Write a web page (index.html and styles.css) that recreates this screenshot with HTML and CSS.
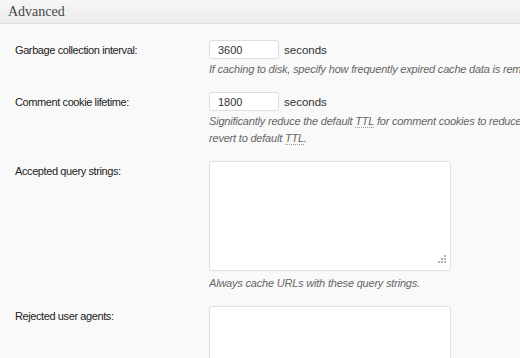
FILE: index.html
```html
<!DOCTYPE html>
<html>
<head>
    <title>Advanced</title>
    <meta charset="UTF-8">
    <link rel="stylesheet" href="styles.css">
</head>
<body>
    <h3 class="titulo">Advanced</h3>
    <div class="tabla">
        <div class="fila">
            <label class="etiqueta">Garbage collection interval:</label>
            <div class="campo">
                <div class="linea"><input type="text" class="corto" value="3600"> seconds</div>
                <p class="descripcion">If caching to disk, specify how frequently expired cache data is removed. For busy sites, a lower value is best.</p>
            </div>
        </div>
        <div class="fila">
            <label class="etiqueta">Comment cookie lifetime:</label>
            <div class="campo">
                <div class="linea"><input type="text" class="corto" value="1800"> seconds</div>
                <p class="descripcion">Significantly reduce the default <acronym title="Time to Live">TTL</acronym> for comment cookies to reduce the number of pages not cached, or leave to<br>revert to default <acronym title="Time to Live">TTL</acronym>.</p>
            </div>
        </div>
        <div class="fila">
            <label class="etiqueta">Accepted query strings:</label>
            <div class="campo">
                <div class="caja">
                    <textarea class="area"></textarea>
                    <svg class="agarre" width="10" height="10" viewBox="0 0 10 10">
                        <rect x="7" y="0" width="2" height="2" fill="#b4b4b4"/>
                        <rect x="4" y="3" width="2" height="2" fill="#b4b4b4"/>
                        <rect x="7" y="3" width="2" height="2" fill="#b4b4b4"/>
                        <rect x="1" y="6" width="2" height="2" fill="#b4b4b4"/>
                        <rect x="4" y="6" width="2" height="2" fill="#b4b4b4"/>
                        <rect x="7" y="6" width="2" height="2" fill="#b4b4b4"/>
                    </svg>
                </div>
                <p class="descripcion bajo">Always cache URLs with these query strings.</p>
            </div>
        </div>
        <div class="fila">
            <label class="etiqueta">Rejected user agents:</label>
            <div class="campo">
                <div class="caja">
                    <textarea class="area"></textarea>
                </div>
                <p class="descripcion bajo">Never send cache pages for these user agents.</p>
            </div>
        </div>
    </div>
</body>
</html>
```

FILE: styles.css
```css
body {
    font-family: "Liberation Sans", Arial, sans-serif;
    font-size: 11px;
    color: #333;
    background-color: #f9f9f9;
    margin: 0;
    padding: 0;
    overflow: hidden;
}

.titulo {
    font-family: "Liberation Serif", Georgia, serif;
    font-weight: normal;
    font-size: 14px;
    color: #464646;
    margin: 0;
    height: 23px;
    line-height: 23px;
    padding: 0 8px;
    background: linear-gradient(#f6f6f6, #ececec);
    border-bottom: 1px solid #dfdfdf;
}

.tabla {
    padding: 9px 0 0 15px;
}

.fila {
    display: flex;
    padding: 7px 0;
}

.etiqueta {
    flex: 0 0 194px;
    line-height: 19px;
    padding-top: 1px;
    color: #222;
    letter-spacing: -0.4px;
}

.campo {
    flex: 1;
    min-width: 0;
    white-space: nowrap;
    overflow: hidden;
}

.linea {
    display: flex;
    align-items: center;
    gap: 5px;
    font-size: 11.5px;
    color: #333;
}

input.corto {
    width: 70px;
    height: 19px;
    box-sizing: border-box;
    border: 1px solid #dfdfdf;
    border-radius: 3px;
    background: #fff;
    font: 11px "Liberation Sans", Arial, sans-serif;
    color: #333;
    padding: 0 8px;
    margin: 0;
}

.caja {
    position: relative;
    width: 242px;
}

.area {
    display: block;
    width: 242px;
    height: 110px;
    box-sizing: border-box;
    border: 1px solid #dfdfdf;
    border-radius: 3px;
    background: #fff;
    margin: 0;
    resize: none;
}

.agarre {
    position: absolute;
    right: 4px;
    bottom: 6px;
}

.descripcion {
    font-style: italic;
    color: #666;
    margin: 2px 0 0;
    line-height: 17px;
    letter-spacing: -0.2px;
}

.descripcion.bajo {
    margin-top: 4px;
}

acronym {
    border-bottom: 1px dotted #999;
    text-decoration: none;
}
```
